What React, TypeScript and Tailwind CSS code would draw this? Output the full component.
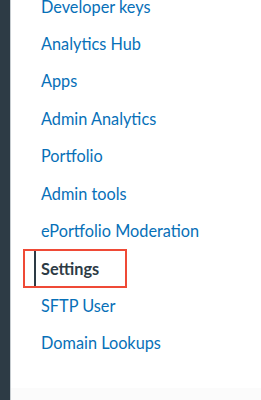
import React from 'react';

const items = [
  'Developer keys',
  'Analytics Hub',
  'Apps',
  'Admin Analytics',
  'Portfolio',
  'Admin tools',
  'ePortfolio Moderation',
  'Settings',
  'SFTP User',
  'Domain Lookups',
];

export default function App() {
  return (
    <div className="flex h-[400px] w-[261px] overflow-hidden bg-white font-['Lato','Liberation_Sans',sans-serif]">
      <div className="w-[11px] shrink-0 bg-[#2d3b45] border-r border-[#c7cdd1]" />
      <div className="flex flex-1 flex-col">
        <nav className="-mt-[12px] flex flex-col pl-[12px]">
          {items.map((item) =>
            item === 'Settings' ? (
              <div key={item} className="flex h-[37.45px] items-center">
                <div className="h-[39px] w-[104px] shrink-0 border-2 border-[#ef4a36]">
                  <div className="ml-[9px] flex h-full items-center border-l-2 border-[#2d3b45] pl-[5px] text-[16.3px] font-bold text-[#2d3b45]">
                    {item}
                  </div>
                </div>
              </div>
            ) : (
              <a key={item} href="#" className="flex h-[37.45px] items-center pl-[18px] text-[16.3px] text-[#0770b8]">
                {item}
              </a>
            )
          )}
        </nav>
        <div className="flex-1" />
        <div className="h-[12px] bg-[#fbfbfb]" />
      </div>
    </div>
  );
}
